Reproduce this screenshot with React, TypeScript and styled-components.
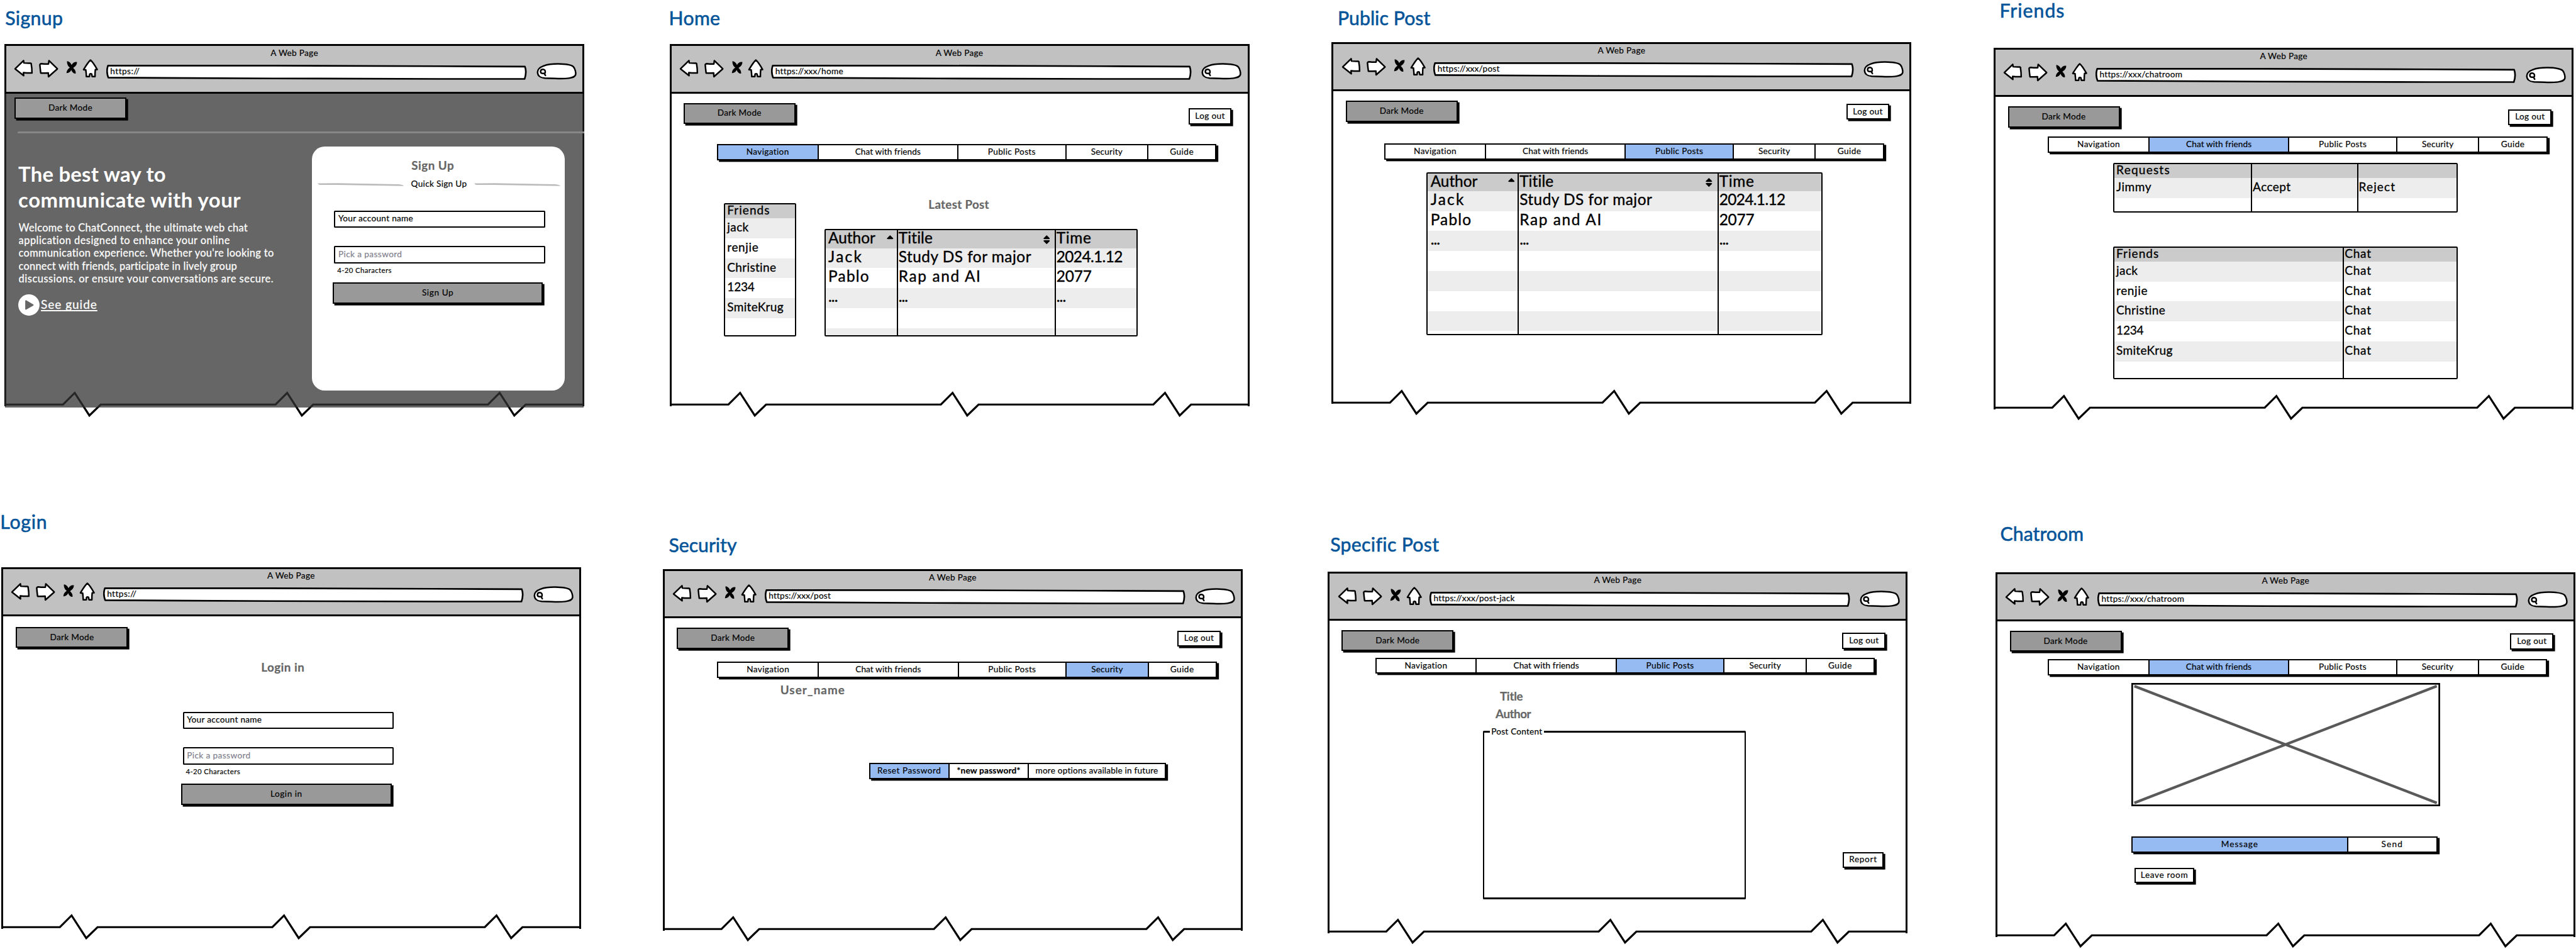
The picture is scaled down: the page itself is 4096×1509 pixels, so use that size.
import React from 'react';
import styled, { createGlobalStyle, css } from 'styled-components';

// Every measure below is in board units; the board is drawn at a fixed scale.
const SCALE = 4096 / 7734;
const u = (n: number) => `${(n * SCALE).toFixed(3)}px`;

const ink = '#000';
const blue = '#95bbf2';
// Line weights in whole device pixels, so that borders keep an even thickness.
const heavy = '3px';
const medium = '2px';

const GlobalStyle = createGlobalStyle`
  *, *::before, *::after { box-sizing: border-box; }
  html, body { margin: 0; background: #fff; }
  body { overflow: hidden; }
`;

/* ---------- type ---------- */

type Kind = 'title' | 'ui' | 'note' | 'heading' | 'hero' | 'copy' | 'link' | 'cell' | 'big';

// `tighten` is taken off every label's tracking, `stroke` thickens the letters (both in em).
const kinds: Record<Kind, { size: number; line: number; weight: number; color: string; tighten: number; stroke: number }> = {
  title: { size: 57, line: 60, weight: 400, color: '#04549a', tighten: 0, stroke: 0.02 },
  ui: { size: 25.7, line: 30, weight: 400, color: ink, tighten: 0.015, stroke: 0.014 },
  note: { size: 21.5, line: 30, weight: 400, color: ink, tighten: 0, stroke: 0.014 },
  heading: { size: 35.5, line: 40, weight: 700, color: '#666', tighten: 0.008, stroke: 0.012 },
  hero: { size: 62, line: 77.5, weight: 700, color: '#fff', tighten: 0, stroke: 0 },
  copy: { size: 31, line: 38.3, weight: 400, color: '#fff', tighten: 0.018, stroke: 0.016 },
  link: { size: 36, line: 59, weight: 400, color: '#fff', tighten: 0.033, stroke: 0.014 },
  cell: { size: 36, line: 52.2, weight: 400, color: ink, tighten: 0.031, stroke: 0.016 },
  big: { size: 46, line: 50.4, weight: 400, color: ink, tighten: 0, stroke: 0.016 },
};

// Letter spacing in em, tuned per label to the lettering of the wireframe kit.
const tracking: Record<Kind, Record<string, number>> = {
  title: { Signup: 0.013, Home: 0.013, 'Public Post': 0.003, Friends: 0.034, Login: 0.027, Security: 0, 'Specific Post': 0.011, Chatroom: 0.002 },
  ui: {
    'A Web Page': 0.038, 'https://': 0.049, 'https://xxx/home': 0.036, 'https://xxx/post': 0.03,
    'https://xxx/chatroom': 0.035, 'https://xxx/post-jack': 0.033, 'Dark Mode': 0.038, 'Log out': 0.04,
    Navigation: 0.041, 'Chat with friends': 0.022, 'Public Posts': 0.04, Security: 0.031, Guide: 0.048,
    'Reset Password': 0.055, '*new password*': 0.029, 'more options available in future': 0.03,
    Message: 0.087, Send: 0.105, 'Leave room': 0.062, Report: 0.065, 'Post Content': 0.031, 'Sign Up': 0.06,
    'Login in': 0.054, 'Quick Sign Up': 0.038, 'Your account name': 0.038, 'Pick a password': 0.045,
  },
  note: { '4-20 Characters': 0.034 },
  heading: { 'Sign Up': 0.033, 'Login in': 0.033, 'Latest Post': 0.024, User_name: 0.065, Title: -0.005, Author: -0.016 },
  hero: { 'The best way to': 0.007, 'communicate with your': 0.016 },
  copy: {
    'Welcome to ChatConnect, the ultimate web chat': 0.037,
    'application designed to enhance your online': 0.047,
    "communication experience. Whether you're looking to": 0.038,
    'connect with friends, participate in lively group': 0.032,
    'discussions, or ensure your conversations are secure.': 0.05,
  },
  link: { 'See guide': 0.083 },
  cell: {
    Friends: 0.084, jack: 0.051, renjie: 0.062, Christine: 0.047, '1234': 0.018, SmiteKrug: 0.046, Chat: 0.07,
    Requests: 0.095, Jimmy: 0.059, Accept: 0.052, Reject: 0.091,
  },
  big: {
    Author: 0, Titile: 0.006, Time: 0.028, Jack: 0.094, Pablo: 0.051, 'Study DS for major': 0.021,
    'Rap and AI': 0.068, '2024.1.12': -0.025, '2077': -0.008, '...': -0.04,
  },
};

const Lettering = styled.span<{ $kind: Kind; $track: number; $color?: string; $bold?: boolean; $line?: number }>`
  display: block;
  font-family: Lato, 'Noto Sans', sans-serif;
  font-size: ${(p) => u(kinds[p.$kind].size)};
  line-height: ${(p) => u(p.$line ?? kinds[p.$kind].line)};
  font-weight: ${(p) => (p.$bold ? 700 : kinds[p.$kind].weight)};
  letter-spacing: ${(p) => (p.$track - kinds[p.$kind].tighten).toFixed(4)}em;
  color: ${(p) => p.$color ?? kinds[p.$kind].color};
  font-kerning: normal;
  white-space: nowrap;
  -webkit-text-stroke: ${(p) => kinds[p.$kind].stroke}em currentColor;
`;

interface TextProps { kind?: Kind; children: string; color?: string; bold?: boolean; line?: number }
const Text = ({ kind = 'ui', children, color, bold, line }: TextProps) => (
  <Lettering $kind={kind} $track={tracking[kind][children] ?? 0} $color={color} $bold={bold} $line={line}>
    {children}
  </Lettering>
);

/* ---------- board ---------- */

const Board = styled.main`
  width: 4096px;
  height: 1509px;
  overflow: hidden;
  display: grid;
  grid-template-columns: ${[1980, 1980, 2000, 1774].map(u).join(' ')};
  grid-template-rows: ${u(1530)} ${u(1320)};
  background: #fff;
`;

const Artboard = styled.section`
  min-width: 0;
  display: flex;
  flex-direction: column;
  align-items: flex-start;
`;

const ArtTitle = styled.div<{ $x: number; $top: number }>`
  padding: ${(p) => u(p.$top)} 0 0 ${(p) => u(p.$x)};
`;

/* ---------- browser window ---------- */

const Frame = styled.div<{ $x: number; $gap: number; $h: number }>`
  position: relative;
  flex: none;
  width: ${u(1741)};
  height: ${(p) => u(p.$h)};
  margin: ${(p) => u(p.$gap)} 0 0 ${(p) => u(p.$x)};
  border: solid ${ink};
  border-width: ${heavy} ${heavy} 0;
`;

const TornLine = styled.svg`
  position: absolute;
  left: -${heavy};
  bottom: ${u(-43)};
  width: ${u(1741)};
  height: ${u(90)};
`;

const Shade = styled.div`
  position: absolute;
  z-index: 1;
  inset: ${u(142)} ${u(-4)} ${u(-4)} ${u(-4)};
  background: rgba(51, 51, 51, 0.75);
`;

const Chrome = styled.header`
  height: ${u(142)};
  padding-top: ${u(6)};
  background: #c1c1c1;
  border-bottom: ${heavy} solid ${ink};
  text-align: center;
`;

const Toolbar = styled.div`
  display: flex;
  align-items: flex-start;
  padding-left: ${u(21.2)};
  text-align: left;
`;

const NavIcons = styled.svg`
  width: ${u(257)};
  height: ${u(60)};
  flex: none;
`;

const Address = styled.div`
  position: relative;
  width: ${u(1263)};
  height: ${u(46)};
  margin: ${u(19)} 0 0 ${u(22)};
  padding-left: ${u(12)};
`;

const AddressInk = styled.svg`
  position: absolute;
  inset: 0;
  width: 100%;
  height: 100%;
`;

const AddressText = styled.div`
  position: relative;
`;

const SearchPill = styled.svg`
  flex: none;
  width: ${u(121.3)};
  height: ${u(51)};
  margin: ${u(14.5)} 0 0 ${u(28)};
`;

const Body = styled.div`
  position: relative;
  z-index: 2;
  display: flex;
  flex-direction: column;
  align-items: flex-start;
`;

const zig = (x: number) => `H${x} L${x + 35} 7 L${x + 79} 75 L${x + 113} 42`;

interface WindowProps { x: number; gap: number; url: string; h?: number; dark?: boolean; children: React.ReactNode }
const BrowserWindow = ({ x, gap, url, h = 1086, dark, children }: WindowProps) => (
  <Frame $x={x} $gap={gap} $h={h}>
    <TornLine viewBox="0 0 1741 90">
      <path d={`M0 42 ${zig(176)} ${zig(814)} ${zig(1452)} H1741`} fill="none" stroke={ink} strokeWidth="6" strokeMiterlimit="10" />
    </TornLine>
    <Chrome>
      <Text>A Web Page</Text>
      <Toolbar>
        <NavIcons viewBox="90 162 771 180" fill="#fff" stroke={ink} strokeWidth="14" strokeLinejoin="round">
          <path d="M107 261 L183 187 L186 208 Q215 211 247 210 Q252 211 252 216 Q259 255 259 298 Q220 300 182 295 L184 322 Z" />
          <path d="M412 187 L488 261 L408 332 L406 298 Q372 299 338 299 Q334 270 330 225 Q331 215 345 214 Q375 218 408 217 Z" />
          <path
            d="M575 192 C592 192 607 206 616 226 C627 205 645 195 664 199 C667 219 652 240 630 253 C646 266 656 285 653 304 C636 306 622 292 613 271 C605 289 591 300 570 299 C570 280 582 262 600 250 C583 238 573 215 575 192Z"
            fill={ink} stroke="none"
          />
          <path d="M786 182 Q768 196 724 268 Q735 268 744 271 Q748 300 749 330 L777 330 L779 308 Q788 302 797 308 L801 330 L827 330 Q826 300 830 268 L847 267 Q806 196 786 182 Z" />
        </NavIcons>
        <Address>
          <AddressInk viewBox="0 0 1263 46" fill="#fff" stroke={ink} strokeWidth="5" strokeLinejoin="round">
            <path d="M5 2.5 L500 2.5 C800 3 1000 4.5 1257 5.5 Q1263 22 1256 42.5 H1000 L500 41 L6 38.5 Q-1 20 5 2.5Z" />
          </AddressInk>
          <AddressText><Text line={38.6}>{url}</Text></AddressText>
        </Address>
        <SearchPill viewBox="150 145 364 153" fill="#fff" stroke={ink} strokeWidth="14" strokeLinecap="round">
          <path d="M160 228 C160 178 240 154 345 154 C420 155 468 164 484 181 C500 200 506 235 503 250 C500 268 485 276 440 283 C380 292 330 284 225 283 C185 280 160 260 160 228Z" />
          <path d="M208 203 C222 203 231 213 229 228 Q229 239 220 240 L203 240 Q187 239 187 222 C188 210 197 203 208 203Z" strokeWidth="14" />
          <path d="M221 242 L231 258" />
        </SearchPill>
      </Toolbar>
    </Chrome>
    {dark && <Shade />}
    <Body>{children}</Body>
  </Frame>
);

/* ---------- controls ---------- */

const Button = styled.div<{ $w: number; $h: number; $grey?: boolean }>`
  flex: none;
  display: flex;
  align-items: center;
  justify-content: center;
  width: ${(p) => u(p.$w)};
  height: ${(p) => u(p.$h)};
  border: ${medium} solid ${ink};
  background: ${(p) => (p.$grey ? '#999' : '#fff')};
  box-shadow: ${u(5)} ${u(5)} 0 ${ink};
`;

const TopBar = styled.div<{ $left: number; $right: number; $h: number }>`
  align-self: stretch;
  display: flex;
  justify-content: space-between;
  align-items: flex-start;
  height: ${(p) => u(p.$h)};
  padding: 0 ${(p) => u(p.$right)} 0 ${(p) => u(p.$left)};
`;

const Drop = styled.div<{ $y: number }>`
  padding-top: ${(p) => u(p.$y)};
`;

const Segments = styled.div<{ $x: number; $y?: number; $w: number }>`
  display: flex;
  width: ${(p) => u(p.$w)};
  height: ${u(48.5)};
  margin: ${(p) => u(p.$y ?? 0)} 0 0 ${(p) => u(p.$x)};
  border: ${medium} solid ${ink};
  box-shadow: ${u(6)} ${u(4.5)} 0 ${ink};
`;

const Segment = styled.div<{ $w?: number; $on?: boolean }>`
  display: flex;
  align-items: center;
  justify-content: center;
  ${(p) => (p.$w ? css`flex: none; width: ${u(p.$w)};` : css`flex: 1;`)}
  background: ${(p) => (p.$on ? blue : '#fff')};
  & + & { border-left: ${medium} solid ${ink}; }
`;

const tabs: [string, number | undefined][] = [
  ['Navigation', 298], ['Chat with friends', 420], ['Public Posts', 324], ['Security', 246.5], ['Guide', undefined],
];

// Tools row and tab strip shared by every signed-in page.
interface HeadProps { x: number; y: number; on: string; logoutX?: number; logoutY?: number; darkX?: number }
const PageHead = ({ x, y, on, logoutX = 60.5, logoutY = 36.5, darkX = 36.5 }: HeadProps) => (
  <>
    <TopBar $left={darkX} $right={logoutX} $h={y - 147.5}>
      <Drop $y={28.4}><Button $w={336} $h={63} $grey><Text>Dark Mode</Text></Button></Drop>
      <Drop $y={logoutY}><Button $w={130} $h={48}><Text>Log out</Text></Button></Drop>
    </TopBar>
    <Segments $x={x - 5.5} $w={1500}>
      {tabs.map(([name, w]) => <Segment key={name} $w={w} $on={name === on}><Text>{name}</Text></Segment>)}
    </Segments>
  </>
);

const Heading = styled.div<{ $x?: number; $y: number }>`
  margin: ${(p) => u(p.$y)} 0 0 ${(p) => u(p.$x ?? 0)};
`;

/* ---------- tables ---------- */

const TableBox = styled.div<{ $x?: number; $y?: number; $w: number; $h: number }>`
  flex: none;
  width: ${(p) => u(p.$w)};
  height: ${(p) => u(p.$h)};
  margin: ${(p) => u(p.$y ?? 0)} 0 0 ${(p) => u(p.$x ?? 0)};
  border: ${medium} solid ${ink};
  border-radius: ${u(4)};
  overflow: hidden;
`;

const Row = styled.div<{ $cols: string; $h: number; $bg: string }>`
  display: grid;
  grid-template-columns: ${(p) => p.$cols};
  height: ${(p) => u(p.$h)};
  background: ${(p) => p.$bg};
`;

const Cell = styled.div<{ $big?: boolean }>`
  display: flex;
  align-items: flex-start;
  padding-left: ${(p) => u(p.$big ? 8 : 6.5)};
  & + & { padding-left: ${u(1.5)}; border-left: ${medium} solid ${ink}; }
`;

const SortMark = styled.svg<{ $right: number }>`
  width: ${u(20)};
  height: ${u(28)};
  margin: ${u(13.5)} ${(p) => u(p.$right)} 0 auto;
`;

interface TableProps {
  x?: number; y?: number; w: number; h: number; cols: (number | null)[];
  head: string[]; rows: string[][]; total: number; big?: boolean;
}
const Table = ({ x, y, w, h, cols, head, rows, total, big }: TableProps) => {
  const kind: Kind = big ? 'big' : 'cell';
  const template = cols.map((c) => (c === null ? '1fr' : u(c))).join(' ');
  return (
    <TableBox $x={x} $y={y} $w={w} $h={h}>
      <Row $cols={template} $h={big ? 53.5 : 41.5} $bg="#cbcbcb">
        {head.map((t, i) => (
          <Cell key={i} $big={big}>
            {t && <Text kind={kind} line={big ? 46 : 35}>{t}</Text>}
            {big && i < 2 && (
              <SortMark viewBox="0 0 20 28" $right={i ? 15 : 9.5} fill={ink}>
                <path d="M10 0 L20 10 Q19 12 16 12 H4 Q1 12 0 10Z" />
                {i === 1 && <path d="M10 27 L20 17 Q19 15 16 15 H4 Q1 15 0 17Z" />}
              </SortMark>
            )}
          </Cell>
        ))}
      </Row>
      {Array.from({ length: total }, (_, r) => (
        <Row key={r} $cols={template} $h={60} $bg={r % 2 ? '#fff' : '#ededed'}>
          {cols.map((_, i) => (
            <Cell key={i} $big={big}>{rows[r]?.[i] && <Text kind={kind}>{rows[r][i]}</Text>}</Cell>
          ))}
        </Row>
      ))}
    </TableBox>
  );
};

const friends = ['jack', 'renjie', 'Christine', '1234', 'SmiteKrug'];
const posts = [
  ['Jack', 'Study DS for major', '2024.1.12'],
  ['Pablo', 'Rap and AI', '2077'],
  ['...', '...', '...'],
];

/* ---------- sign up and log in ---------- */

const Credentials = styled.div<{ $x: number; $y: number }>`
  width: ${u(633.5)};
  margin: ${(p) => u(p.$y)} 0 0 ${(p) => u(p.$x)};
`;

const Field = styled.div`
  height: ${u(52.5)};
  padding: ${u(6)} 0 0 ${u(8.5)};
  border: ${medium} solid ${ink};
  border-radius: ${u(3)};
  background: #fff;
  & + & { margin-top: ${u(55)}; }
`;

const Note = styled.div`
  margin: ${u(6)} 0 ${u(20.4)} ${u(9)};
`;

const Submit = styled.div`
  margin-left: ${u(-5)};
`;

const CredentialsForm = ({ x, y, action }: { x: number; y: number; action: string }) => (
  <Credentials $x={x} $y={y}>
    <Field><Text>Your account name</Text></Field>
    <Field><Text color="#80808c">Pick a password</Text></Field>
    <Note><Text kind="note">4-20 Characters</Text></Note>
    <Submit><Button $w={632} $h={63} $grey><Text>{action}</Text></Button></Submit>
  </Credentials>
);

const Rule = styled.div`
  width: ${u(1702)};
  height: ${u(5)};
  margin-left: ${u(33.5)};
  border-radius: ${u(3)} 0 0 ${u(3)};
  background: #888;
`;

const Landing = styled.div`
  display: flex;
  align-items: flex-start;
`;

const Pitch = styled.div`
  width: ${u(918)};
  padding: ${u(83)} 0 0 ${u(36)};
`;

const Copy = styled.div`
  height: ${u(185.5)};
  margin: ${u(26.4)} 0 ${u(33.8)} ${u(1)};
  overflow: hidden;
`;

const Guide = styled.div`
  display: flex;
  gap: ${u(4.5)};
  margin-left: ${u(-0.5)};
`;

const PlayMark = styled.svg`
  width: ${u(64)};
  height: ${u(64)};
`;

const GuideLink = styled.div`
  text-decoration: underline;
  text-decoration-color: #fff;
  text-decoration-thickness: ${u(3.2)};
  text-underline-offset: ${u(4)};
  text-decoration-skip-ink: none;
`;

const Card = styled.div`
  width: ${u(759)};
  height: ${u(733)};
  margin-top: ${u(39)};
  padding-top: ${u(37)};
  border-radius: ${u(38)};
  background: #fff;
`;

const CardHeading = styled.div`
  padding-right: ${u(34)};
  text-align: center;
`;

const Divider = styled.div`
  display: flex;
  align-items: center;
  justify-content: space-between;
  height: ${u(34)};
  margin: ${u(20.9)} ${u(14)} 0 ${u(17)};
`;

const Dash = styled.svg`
  width: ${u(259)};
  height: ${u(10)};
`;

const DashLine = () => (
  <Dash viewBox="0 0 259 10"><path d="M0 1 L60 0.5 L240 4 Q258 5 259 9 L60 5.5 H6 Q1 4 0 1Z" fill="#bbb" /></Dash>
);

const pitch = ['The best way to', 'communicate with your'];

/* ---------- other page parts ---------- */

const HomeRow = styled.div`
  display: flex;
  align-items: flex-start;
  margin: ${u(109.5)} 0 0 ${u(157.5)};
`;

const Latest = styled.div`
  margin-left: ${u(84)};
`;

const PostRow = styled.div`
  display: flex;
  align-items: flex-start;
  margin: ${u(15)} 0 0 ${u(459.5)};
`;

const PostContent = styled.fieldset`
  width: ${u(790)};
  height: ${u(522.6)};
  min-width: 0;
  margin: 0 ${u(291)} 0 0;
  padding: 0 0 0 ${u(17)};
  border: solid ${ink};
  border-width: ${heavy} ${medium} ${heavy};
  border-radius: ${u(3)};
`;

const PostLegend = styled.legend`
  padding: 0 ${u(5)} 0 ${u(5)};
`;

const Placeholder = styled.svg`
  width: ${u(927)};
  height: ${u(370)};
  margin: ${u(23.5)} 0 0 ${u(401.5)};
`;

const Leave = styled.div`
  margin: ${u(45)} 0 0 ${u(410.5)};
`;

/* ---------- app ---------- */

export default function App() {
  return (
    <Board>
      <GlobalStyle />

      <Artboard>
        <ArtTitle $x={15.5} $top={24}><Text kind="title">Signup</Text></ArtTitle>
        <BrowserWindow x={13.3} gap={49} url="https://" dark>
          <TopBar $left={24.5} $right={0} $h={114.5}>
            <Drop $y={12.4}><Button $w={336} $h={63} $grey><Text>Dark Mode</Text></Button></Drop>
          </TopBar>
          <Rule />
          <Landing>
            <Pitch>
              {pitch.map((t) => <Text key={t} kind="hero">{t}</Text>)}
              <Copy>{Object.keys(tracking.copy).map((t) => <Text key={t} kind="copy">{t}</Text>)}</Copy>
              <Guide>
                <PlayMark viewBox="0 0 64 64">
                  <circle cx="32" cy="32" r="32" fill="#fff" />
                  <path d="M21 20 Q21 17 24 18 L45 30 Q48 32 45 34 L24 46 Q21 47 21 44Z" fill="#666" />
                </PlayMark>
                <GuideLink><Text kind="link">See guide</Text></GuideLink>
              </Guide>
            </Pitch>
            <Card>
              <CardHeading><Text kind="heading">Sign Up</Text></CardHeading>
              <Divider><DashLine /><Text>Quick Sign Up</Text><DashLine /></Divider>
              <CredentialsForm x={66.5} y={60.8} action="Sign Up" />
            </Card>
          </Landing>
        </BrowserWindow>
      </Artboard>

      <Artboard>
        <ArtTitle $x={28} $top={24}><Text kind="title">Home</Text></ArtTitle>
        <BrowserWindow x={30} gap={49} url="https://xxx/home">
          <PageHead x={142} y={300} on="Navigation" logoutX={47.5} logoutY={44.5} />
          <HomeRow>
            <Table y={19} w={218} h={400} cols={[null]} head={['Friends']} rows={friends.map((f) => [f])} total={6} />
            <Latest>
              <Heading $x={312.5} $y={1}><Text kind="heading">Latest Post</Text></Heading>
              <Table y={56} w={941} h={322} big cols={[213.7, 474, null]} head={['Author', 'Titile', 'Time']} rows={posts} total={5} />
            </Latest>
          </HomeRow>
        </BrowserWindow>
      </Artboard>

      <Artboard>
        <ArtTitle $x={56} $top={24}><Text kind="title">Public Post</Text></ArtTitle>
        <BrowserWindow x={38} gap={43} url="https://xxx/post">
          <PageHead x={158} y={304} on="Public Posts" />
          <Table x={279.5} y={37} w={1188} h={490} big cols={[270, 599.5, null]} head={['Author', 'Titile', 'Time']} rows={posts} total={8} />
        </BrowserWindow>
      </Artboard>

      <Artboard>
        <ArtTitle $x={43.5} $top={2}><Text kind="title">Friends</Text></ArtTitle>
        <BrowserWindow x={26} gap={81.5} url="https://xxx/chatroom">
          <PageHead x={162} y={267} on="Chat with friends" />
          <Table x={352} y={30} w={1035} h={149} cols={[411, 318, null]} head={['Requests', '', '']} rows={[['Jimmy', 'Accept', 'Reject']]} total={2} />
          <Table x={352} y={102} w={1035} h={399} cols={[687, null]} head={['Friends', 'Chat']} rows={friends.map((f) => [f, 'Chat'])} total={6} />
        </BrowserWindow>
      </Artboard>

      <Artboard>
        <ArtTitle $x={0.5} $top={7}><Text kind="title">Login</Text></ArtTitle>
        <BrowserWindow x={3.5} gap={106.5} url="https://">
          <TopBar $left={39} $right={0} $h={130.5}>
            <Drop $y={31.5}><Button $w={336} $h={63} $grey><Text>Dark Mode</Text></Button></Drop>
          </TopBar>
          <Heading $x={775} $y={1.5}><Text kind="heading">Login in</Text></Heading>
          <CredentialsForm x={539.7} y={113.5} action="Login in" />
        </BrowserWindow>
      </Artboard>

      <Artboard>
        <ArtTitle $x={28} $top={76}><Text kind="title">Security</Text></ArtTitle>
        <BrowserWindow x={10} gap={43} url="https://xxx/post">
          <PageHead x={163} y={278} on="Security" />
          <Heading $x={347} $y={15}><Text kind="heading">User_name</Text></Heading>
          <Segments $x={613.5} $y={200.5} $w={891}>
            <Segment $w={234} $on><Text>Reset Password</Text></Segment>
            <Segment $w={239}><Text bold>*new password*</Text></Segment>
            <Segment><Text>more options available in future</Text></Segment>
          </Segments>
        </BrowserWindow>
      </Artboard>

      <Artboard>
        <ArtTitle $x={34} $top={75}><Text kind="title">Specific Post</Text></ArtTitle>
        <BrowserWindow x={26.5} gap={51} url="https://xxx/post-jack">
          <PageHead x={142} y={258.5} on="Public Posts" darkX={36} />
          <Heading $x={511} $y={45.5}><Text kind="heading">Title</Text></Heading>
          <Heading $x={498} $y={14}><Text kind="heading">Author</Text></Heading>
          <PostRow>
            <PostContent><PostLegend><Text line={38}>Post Content</Text></PostLegend></PostContent>
            <Drop $y={380.5}><Button $w={122} $h={47}><Text>Report</Text></Button></Drop>
          </PostRow>
        </BrowserWindow>
      </Artboard>

      <Artboard>
        <ArtTitle $x={45.5} $top={43}><Text kind="title">Chatroom</Text></ArtTitle>
        <BrowserWindow x={31.7} gap={85} url="https://xxx/chatroom" h={1096}>
          <PageHead x={156} y={260.5} on="Chat with friends" />
          <Placeholder viewBox="0 0 927 370">
            <path d="M9 9.5 L917 360 M917 9.5 L9 360" stroke="#595959" strokeWidth="8" />
            <rect x="2.5" y="2.5" width="922" height="365" fill="none" stroke={ink} strokeWidth="5" />
          </Placeholder>
          <Segments $x={401.5} $y={91} $w={919}>
            <Segment $w={644} $on><Text>Message</Text></Segment>
            <Segment><Text>Send</Text></Segment>
          </Segments>
          <Leave><Button $w={181} $h={46}><Text>Leave room</Text></Button></Leave>
        </BrowserWindow>
      </Artboard>
    </Board>
  );
}
